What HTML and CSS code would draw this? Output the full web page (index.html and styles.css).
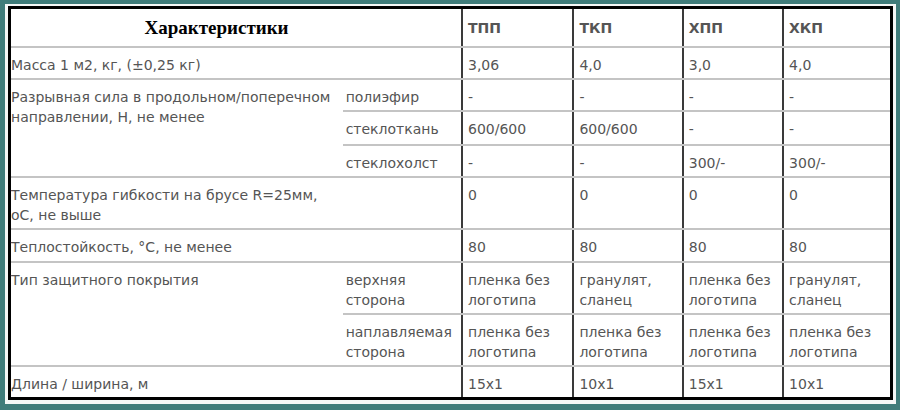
FILE: index.html
```html
<!DOCTYPE html>
<html lang="ru">
<head>
<meta charset="utf-8">
<link rel="stylesheet" href="styles.css">
</head>
<body>
<div class="frame">
  <table class="spec">
    <colgroup>
      <col class="c-label">
      <col class="c-sub">
      <col class="c-v1">
      <col class="c-v2">
      <col class="c-v3">
      <col class="c-v4">
    </colgroup>
    <tr class="r-head">
      <th colspan="2" class="title">Характеристики</th>
      <th class="vh">ТПП</th>
      <th class="vh">ТКП</th>
      <th class="vh">ХПП</th>
      <th class="vh">ХКП</th>
    </tr>
    <tr class="r32">
      <td colspan="2" class="lbl">Масса 1 м2, кг, (±0,25 кг)</td>
      <td class="v">3,06</td><td class="v">4,0</td><td class="v">3,0</td><td class="v">4,0</td>
    </tr>
    <tr class="r32">
      <td rowspan="3" class="lbl">Разрывная сила в продольном/поперечном<br>направлении, Н, не менее</td>
      <td class="sub">полиэфир</td>
      <td class="v">-</td><td class="v">-</td><td class="v">-</td><td class="v">-</td>
    </tr>
    <tr class="r34">
      <td class="sub">стеклоткань</td>
      <td class="v">600/600</td><td class="v">600/600</td><td class="v">-</td><td class="v">-</td>
    </tr>
    <tr class="r32">
      <td class="sub">стеклохолст</td>
      <td class="v">-</td><td class="v">-</td><td class="v">300/-</td><td class="v">300/-</td>
    </tr>
    <tr class="r52">
      <td class="lbl">Температура гибкости на брусе R=25мм,<br>оС, не выше</td>
      <td class="sub"></td>
      <td class="v">0</td><td class="v">0</td><td class="v">0</td><td class="v">0</td>
    </tr>
    <tr class="r33">
      <td class="lbl">Теплостойкость, °С, не менее</td>
      <td class="sub"></td>
      <td class="v">80</td><td class="v">80</td><td class="v">80</td><td class="v">80</td>
    </tr>
    <tr class="r52">
      <td rowspan="2" class="lbl">Тип защитного покрытия</td>
      <td class="sub">верхняя<br>сторона</td>
      <td class="v">пленка без<br>логотипа</td><td class="v">гранулят,<br>сланец</td><td class="v">пленка без<br>логотипа</td><td class="v">гранулят,<br>сланец</td>
    </tr>
    <tr class="r52">
      <td class="sub">наплавляемая<br>сторона</td>
      <td class="v">пленка без<br>логотипа</td><td class="v">пленка без<br>логотипа</td><td class="v">пленка без<br>логотипа</td><td class="v">пленка без<br>логотипа</td>
    </tr>
    <tr class="r32 last">
      <td class="lbl">Длина / ширина, м</td>
      <td class="sub"></td>
      <td class="v">15x1</td><td class="v">10x1</td><td class="v">15x1</td><td class="v">10x1</td>
    </tr>
  </table>
</div>
</body>
</html>
```

FILE: styles.css
```css
html, body {
  margin: 0;
  padding: 0;
}
body {
  background: #3f7c7a;
  padding: 4px 4px 4px 5px;
  width: 900px;
  height: 410px;
  box-sizing: border-box;
}
.frame {
  background: #f4f7f6;
  padding: 2px 3px 4px 3px;
}
.spec {
  border-collapse: collapse;
  border: 3px solid #000;
  background: #fff;
  table-layout: fixed;
  width: 885px;
  font-family: "DejaVu Sans", Verdana, sans-serif;
  font-size: 14px;
  line-height: 20px;
  color: #555;
}
.c-label { width: 332px; }
.c-sub { width: 119px; }
.c-v1 { width: 111px; }
.c-v2 { width: 109px; }
.c-v3 { width: 100px; }
.c-v4 { width: 108px; }

.spec td, .spec th {
  vertical-align: top;
  white-space: nowrap;
  text-align: left;
  padding: 7px 4px 3px 5px;
  border-top: 2px solid #c4c4c4;
  border-bottom: 2px solid #c4c4c4;
}
.spec tr.r-head th {
  border-top: none;
  vertical-align: middle;
  padding-top: 2px;
  padding-bottom: 0;
}
.spec tr.last td { border-bottom: none; }
.spec .lbl { padding-left: 0; }
.spec .sub { padding-left: 3px; }
.spec .v, .spec .vh {
  border-left: 2px solid #3a3a3a;
}
.spec .vh {
  font-weight: bold;
  color: #555;
}
.spec .title {
  font-family: "Liberation Serif", "Times New Roman", serif;
  font-size: 19px;
  font-weight: bold;
  color: #000;
  text-align: center;
  padding-right: 44px;
}
.r-head { height: 39px; }
.r32 { height: 32px; }
.r33 { height: 33px; }
.r34 { height: 34px; }
.r52 { height: 52px; }
```
